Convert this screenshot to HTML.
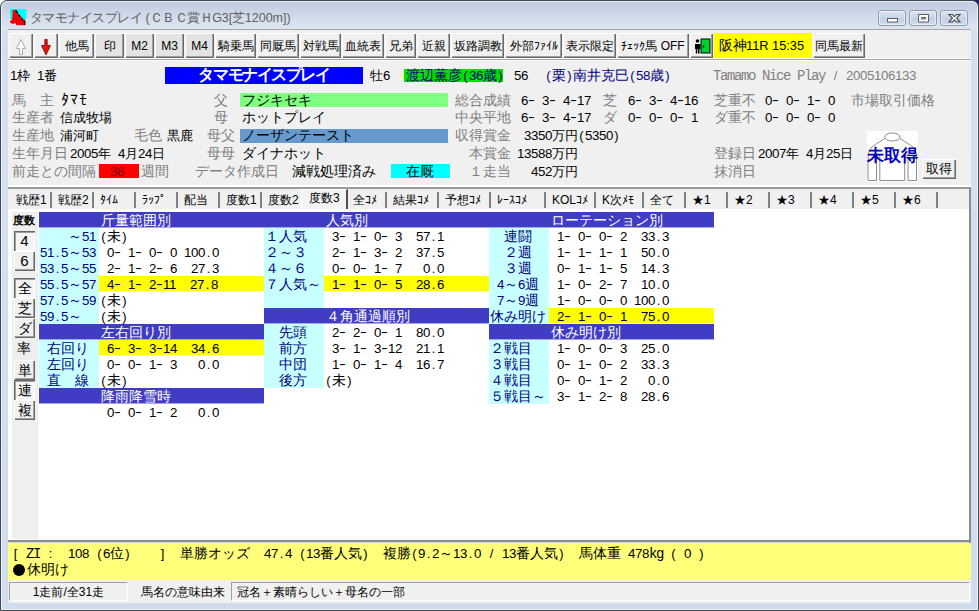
<!DOCTYPE html>
<html lang="ja"><head><meta charset="utf-8"><title>タマモナイスプレイ</title><style>
html,body{margin:0;padding:0}
body{width:979px;height:611px;overflow:hidden;position:relative;background:#fff;font-family:"Liberation Sans",sans-serif}
#win{position:absolute;left:0;top:0;width:977px;height:609px;border:1px solid #3f4650;border-radius:7px 7px 0 0;background:linear-gradient(#c0cde0 0px,#c4d0e3 6px,#d2dceb 16px,#dde6f2 29px,#d3e0f0 30px,#cfddee 611px);overflow:hidden}
#win:before{content:"";position:absolute;left:0;top:0;right:0;bottom:0;border:1px solid rgba(255,255,255,.65);border-radius:6px 6px 0 0}
.b{position:absolute}
.t{position:absolute;white-space:pre;color:#000}
.m{font-family:"Liberation Sans",sans-serif}
.m .a{font-family:"Liberation Mono",monospace}
.m .d{font-size:13.3px;letter-spacing:-.4px}
.m b{font-size:13px}
.m b,.m s{display:inline-block;width:7px;text-align:center;font-weight:inherit;white-space:pre;text-decoration:none}
.m s{font-size:13px;transform:scale(1.6,1) translateY(-1px)}
.s{font-family:"Liberation Sans",sans-serif}
.serif{font-family:"Liberation Serif",serif}
.a{letter-spacing:var(--ls)}
i,u{display:inline-block;width:1em;text-align:center;font-style:normal;text-decoration:none;letter-spacing:0;white-space:nowrap}
u{width:.5em}
.hk u{width:9.4px}
.nm i{width:14.6px}
.btn{position:absolute;box-sizing:border-box;box-shadow:inset 1px 1px 0 #fff,inset -1px -1px 0 #696969,inset -2px -2px 0 #a0a0a0;display:flex;align-items:center;justify-content:center;font-size:12px;white-space:pre;color:#000;font-family:"Liberation Sans",sans-serif}
.btn.sunk{box-shadow:inset 1px 1px 0 #696969,inset 2px 2px 0 #a0a0a0,inset -1px -1px 0 #fff}
.bl{display:inline-block;white-space:pre;line-height:14px}
.tab{position:absolute;box-sizing:border-box;border-right:2px solid #808080;display:flex;align-items:center;justify-content:flex-start;padding-left:6px;font-size:12px;white-space:pre;color:#000}
.tab.sel{background:#f3f3f3;border-right:2px solid #505050;border-left:1px solid #fff;border-top:1px solid #fff;align-items:flex-start;padding-top:1px;padding-left:7px}
.sunkp{position:absolute;box-sizing:border-box;border:1px solid;border-color:#a0a0a0 #fff #fff #a0a0a0}
.wb{position:absolute;top:10px;height:16px;width:28px;box-sizing:border-box;border:1px solid #909cae;border-radius:3px;background:linear-gradient(#dbe4f0,#c9d5e6 50%,#c0cee2 51%,#d2dded);box-shadow:inset 0 0 0 1px rgba(255,255,255,.55)}
</style></head>
<body>
<div class="b" style="right:0;top:0;width:8px;height:8px;background:#1e2258"></div>
<div id="win">
<div class="b" style="left:-1px;top:-1px;width:979px;height:611px">
<svg class="b" style="left:10px;top:9px" width="17" height="17" viewBox="0 0 17 17"><rect x="0" y="0" width="16.5" height="10" fill="#00ffff"/><path d="M2.5 1 L4.5 1 L7 4 L9 6.5 L11 9 L13 11 L15.5 13 L15 16.2 L6.5 16.2 L5.5 14 L3 15 L0 13.5 L0 12.5 L2 10.5 L2.5 6 Z" fill="#f00000"/><path d="M5.5 1 L8 4.5 M8.5 5.5 L10.5 8 M11.5 8.5 L13 11.5 M13.8 10.5 L15.2 13.5 M14.5 13.5 L14.8 16" stroke="#200" stroke-width="1.3" fill="none"/></svg>

<div class="wb" style="left:878px"><svg width="26" height="13" viewBox="0 0 26 13" style="position:absolute;left:0;top:.5px"><rect x="8.5" y="6.5" width="10" height="3.5" fill="#fff" stroke="#565d68" stroke-width="1"/></svg></div>
<div class="wb" style="left:909px"><svg width="26" height="13" viewBox="0 0 26 13" style="position:absolute;left:0;top:.5px"><path d="M8.5 2.5 H18.5 V10 H8.5 Z M11.5 5.5 V7 H15.5 V5.5 Z" fill="#fff" fill-rule="evenodd" stroke="#565d68" stroke-width="1"/></svg></div>
<div class="wb" style="left:940px"><svg width="26" height="13" viewBox="0 0 26 13" style="position:absolute;left:0;top:.5px"><path d="M8 2.5 L11.5 2.5 L13.5 4.6 L15.5 2.5 L19 2.5 L15.6 6.2 L19 10 L15.5 10 L13.5 7.9 L11.5 10 L8 10 L11.4 6.2 Z" fill="#fff" stroke="#4a505a" stroke-width="1.2"/></svg></div>

<div class="t s title" style="left:29.5px;top:9.5px;font-size:12.5px;line-height:16px;height:16px;color:#606060;"><i>タ</i><i>マ</i><i>モ</i><i>ナ</i><i>イ</i><i>ス</i><i>プ</i><i>レ</i><i>イ</i> (<i>Ｃ</i><i>Ｂ</i><i>Ｃ</i><i>賞</i><i>Ｈ</i>G3[<i>芝</i>1200m])</div>
<div class="b " style="left:8px;top:29px;width:963px;height:1px;background:#a6a6a6;"></div>
<div class="b " style="left:8px;top:30px;width:963px;height:30px;background:#f0f0f0;"></div>
<div class="b " style="left:8px;top:58px;width:963px;height:1px;background:#fff;"></div>
<div class="b " style="left:8px;top:59px;width:963px;height:1px;background:#a6a6a6;"></div>
<div class="btn" style="left:9px;top:33px;width:24px;height:25px;background:#f0f0f0"><svg width="14" height="18" viewBox="0 0 14 18" style="margin-top:2px"><path d="M7 1.5 L11.5 10.5 H8.5 V16.5 H5.5 V10.5 H2.5 Z" fill="#fff" stroke="#adadad" stroke-width="1"/></svg></div>
<div class="btn" style="left:34px;top:33px;width:24px;height:25px;background:#f0f0f0"><svg width="14" height="18" viewBox="0 0 14 18" style="margin-top:2px"><path d="M5.8 1.5 H8.2 V7.5 H11.5 L7 17 L2.5 7.5 H5.8 Z" fill="#ee1010" stroke="#700" stroke-width="0.8"/></svg></div>
<div class="btn" style="left:59px;top:33px;width:35px;height:25px;background:#f0f0f0"><span class="bl"><i>他</i><i>馬</i></span></div>
<div class="btn" style="left:95px;top:33px;width:29px;height:25px;background:#e3e3e3"><span class="bl"><i>印</i></span></div>
<div class="btn" style="left:125px;top:33px;width:29px;height:25px;background:#e3e3e3"><span class="bl">M2</span></div>
<div class="btn" style="left:155px;top:33px;width:29px;height:25px;background:#e3e3e3"><span class="bl">M3</span></div>
<div class="btn" style="left:185px;top:33px;width:29px;height:25px;background:#e3e3e3"><span class="bl">M4</span></div>
<div class="btn" style="left:215px;top:33px;width:41px;height:25px;background:#f0f0f0"><span class="bl"><i>騎</i><i>乗</i><i>馬</i></span></div>
<div class="btn" style="left:257px;top:33px;width:42px;height:25px;background:#f0f0f0"><span class="bl"><i>同</i><i>厩</i><i>馬</i></span></div>
<div class="btn" style="left:300px;top:33px;width:41px;height:25px;background:#f0f0f0"><span class="bl"><i>対</i><i>戦</i><i>馬</i></span></div>
<div class="btn" style="left:342px;top:33px;width:42px;height:25px;background:#f0f0f0"><span class="bl"><i>血</i><i>統</i><i>表</i></span></div>
<div class="btn" style="left:385px;top:33px;width:31px;height:25px;background:#f0f0f0"><span class="bl"><i>兄</i><i>弟</i></span></div>
<div class="btn" style="left:417px;top:33px;width:33px;height:25px;background:#f0f0f0"><span class="bl"><i>近</i><i>親</i></span></div>
<div class="btn" style="left:451px;top:33px;width:53px;height:25px;background:#f0f0f0"><span class="bl"><i>坂</i><i>路</i><i>調</i><i>教</i></span></div>
<div class="btn" style="left:505px;top:33px;width:57px;height:25px;background:#f0f0f0"><span class="bl"><i>外</i><i>部</i><u>ﾌ</u><u>ｧ</u><u>ｲ</u><u>ﾙ</u></span></div>
<div class="btn" style="left:563px;top:33px;width:53px;height:25px;background:#f0f0f0"><span class="bl"><i>表</i><i>示</i><i>限</i><i>定</i></span></div>
<div class="btn" style="left:617px;top:33px;width:72px;height:25px;background:#f0f0f0"><span class="bl"><u>ﾁ</u><u>ｪ</u><u>ｯ</u><u>ｸ</u><i>馬</i> OFF</span></div>
<div class="btn" style="left:690px;top:33px;width:23px;height:25px;background:#f0f0f0"><svg width="18" height="16" viewBox="0 0 18 16"><rect x="8" y="1" width="9" height="14" fill="#00d030" stroke="#000" stroke-width="1"/><circle cx="10.5" cy="8.5" r="0.9" fill="#000"/><circle cx="4.5" cy="3" r="1.8" fill="#000"/><path d="M2 6 H7.5 V11 H6.5 V15.5 H5 V11 H4.3 V15.5 H2.8 V11 H2 Z" fill="#000"/></svg></div>
<div class="btn" style="left:714px;top:33px;width:98px;height:25px;background:#ffff00;box-shadow:none;justify-content:flex-start;padding-left:5px;font-size:12.8px"><span class="bl"><span style="font-size:13.5px"><i>阪</i><i>神</i></span>11R 15:35</span></div>
<div class="btn" style="left:813px;top:33px;width:52px;height:25px;background:#f0f0f0"><span class="bl"><i>同</i><i>馬</i><i>最</i><i>新</i></span></div>
<div class="b " style="left:8px;top:60px;width:963px;height:127px;background:#f0f0f0;"></div>
<div class="b " style="left:8px;top:60px;width:963px;height:1px;background:#fafafa;"></div>
<div class="t m " style="left:10px;top:68px;font-size:13px;line-height:16px;height:16px;--ls:-0.80px;"><span class="d">1</span><i>枠</i><b> </b><span class="d">1</span><i>番</i></div>
<div class="b " style="left:165px;top:67px;width:198px;height:17px;background:#0000ff;"></div>
<div class="t m nm" style="left:165px;top:66px;font-size:16px;line-height:17px;height:17px;color:#fff;font-weight:bold;width:198px;text-align:center;--ls:-1.60px;"><i>タ</i><i>マ</i><i>モ</i><i>ナ</i><i>イ</i><i>ス</i><i>プ</i><i>レ</i><i>イ</i></div>
<div class="t m " style="left:370px;top:68px;font-size:13px;line-height:16px;height:16px;--ls:-0.80px;"><i>牡</i><span class="d">6</span></div>
<div class="b " style="left:404px;top:69px;width:99px;height:13px;background:#00e000;"></div>
<div class="t m " style="left:406px;top:67px;font-size:14px;line-height:16px;height:16px;color:#000080;--ls:-1.40px;"><i>渡</i><i>辺</i><i>薫</i><i>彦</i><b>(</b><span class="d">36</span><i>歳</i><b>)</b></div>
<div class="t m " style="left:514px;top:67px;font-size:14px;line-height:16px;height:16px;--ls:-1.40px;"><span class="d">56</span></div>
<div class="t m " style="left:545px;top:67px;font-size:14px;line-height:16px;height:16px;color:#000080;--ls:-1.40px;"><b>(</b><i>栗</i><b>)</b><i>南</i><i>井</i><i>克</i><i>巳</i><b>(</b><span class="d">58</span><i>歳</i><b>)</b></div>
<div class="t m " style="left:713px;top:67px;font-size:14px;line-height:16px;height:16px;color:#808080;--ls:-1.40px;"><span class="a">Tamamo</span><b> </b><span class="a">Nice</span><b> </b><span class="a">Play</span><b> </b><b>/</b><b> </b><span class="d">2005106133</span></div>
<div class="t m " style="left:12px;top:92px;font-size:14px;line-height:16px;height:16px;color:#808080;--ls:-1.40px;"><i>馬</i><i>　</i><i>主</i></div>
<div class="t m hk" style="left:60px;top:92px;font-size:16px;line-height:16px;height:16px;--ls:-1.60px;"><u>ﾀ</u><u>ﾏ</u><u>ﾓ</u></div>
<div class="t m " style="left:12px;top:109px;font-size:14px;line-height:16px;height:16px;color:#808080;--ls:-1.40px;"><i>生</i><i>産</i><i>者</i></div>
<div class="t m " style="left:60px;top:110px;font-size:13px;line-height:16px;height:16px;--ls:-0.80px;"><i>信</i><i>成</i><i>牧</i><i>場</i></div>
<div class="t m " style="left:12px;top:127px;font-size:14px;line-height:16px;height:16px;color:#808080;--ls:-1.40px;"><i>生</i><i>産</i><i>地</i></div>
<div class="t m " style="left:60px;top:128px;font-size:13px;line-height:16px;height:16px;--ls:-0.80px;"><i>浦</i><i>河</i><i>町</i></div>
<div class="t m " style="left:134px;top:127px;font-size:14px;line-height:16px;height:16px;color:#808080;--ls:-1.40px;"><i>毛</i><i>色</i></div>
<div class="t m " style="left:167px;top:128px;font-size:13px;line-height:16px;height:16px;--ls:-0.80px;"><i>黒</i><i>鹿</i></div>
<div class="t m " style="left:12px;top:145px;font-size:14px;line-height:16px;height:16px;color:#808080;--ls:-1.40px;"><i>生</i><i>年</i><i>月</i><i>日</i></div>
<div class="t m " style="left:70px;top:146px;font-size:13px;line-height:16px;height:16px;--ls:-0.80px;"><span class="d">2005</span><i>年</i><b> </b><span class="d">4</span><i>月</i><span class="d">24</span><i>日</i></div>
<div class="t m " style="left:12px;top:163px;font-size:14px;line-height:16px;height:16px;color:#808080;--ls:-1.40px;"><i>前</i><i>走</i><i>と</i><i>の</i><i>間</i><i>隔</i></div>
<div class="b " style="left:99px;top:164px;width:40px;height:14px;background:#ff0000;"></div>
<div class="t m " style="left:110px;top:163px;font-size:14px;line-height:16px;height:16px;color:#800000;--ls:-1.40px;"><span class="d">36</span></div>
<div class="t m " style="left:141px;top:163px;font-size:14px;line-height:16px;height:16px;color:#808080;--ls:-1.40px;"><i>週</i><i>間</i></div>
<div class="t m " style="left:214px;top:92px;font-size:14px;line-height:16px;height:16px;color:#808080;--ls:-1.40px;"><i>父</i></div>
<div class="b " style="left:240px;top:93px;width:208px;height:14px;background:#80ff80;"></div>
<div class="t m " style="left:242px;top:92px;font-size:14px;line-height:16px;height:16px;--ls:-1.40px;"><i>フ</i><i>ジ</i><i>キ</i><i>セ</i><i>キ</i></div>
<div class="t m " style="left:214px;top:109px;font-size:14px;line-height:16px;height:16px;color:#808080;--ls:-1.40px;"><i>母</i></div>
<div class="t m " style="left:242px;top:109px;font-size:14px;line-height:16px;height:16px;--ls:-1.40px;"><i>ホ</i><i>ッ</i><i>ト</i><i>プ</i><i>レ</i><i>イ</i></div>
<div class="t m " style="left:207px;top:127px;font-size:14px;line-height:16px;height:16px;color:#808080;--ls:-1.40px;"><i>母</i><i>父</i></div>
<div class="b " style="left:240px;top:129px;width:208px;height:14px;background:#6699cc;"></div>
<div class="t m " style="left:242px;top:127px;font-size:14px;line-height:16px;height:16px;--ls:-1.40px;"><i>ノ</i><i>ー</i><i>ザ</i><i>ン</i><i>テ</i><i>ー</i><i>ス</i><i>ト</i></div>
<div class="t m " style="left:207px;top:145px;font-size:14px;line-height:16px;height:16px;color:#808080;--ls:-1.40px;"><i>母</i><i>母</i></div>
<div class="t m " style="left:242px;top:145px;font-size:14px;line-height:16px;height:16px;--ls:-1.40px;"><i>ダ</i><i>イ</i><i>ナ</i><i>ホ</i><i>ッ</i><i>ト</i></div>
<div class="t m " style="left:195px;top:163px;font-size:14px;line-height:16px;height:16px;color:#808080;--ls:-1.40px;"><i>デ</i><i>ー</i><i>タ</i><i>作</i><i>成</i><i>日</i></div>
<div class="t m " style="left:292px;top:163px;font-size:14px;line-height:16px;height:16px;--ls:-1.40px;"><i>減</i><i>戦</i><i>処</i><i>理</i><i>済</i><i>み</i></div>
<div class="b " style="left:391px;top:164px;width:59px;height:14px;background:#00ffff;"></div>
<div class="t m " style="left:406px;top:163px;font-size:14px;line-height:16px;height:16px;--ls:-1.40px;"><i>在</i><i>厩</i></div>
<div class="t m " style="left:455px;top:92px;font-size:14px;line-height:16px;height:16px;color:#808080;--ls:-1.40px;"><i>総</i><i>合</i><i>成</i><i>績</i></div>
<div class="t m " style="left:521px;top:92px;font-size:14px;line-height:16px;height:16px;--ls:-1.40px;"><span class="d">6</span><s>-</s><b> </b><span class="d">3</span><s>-</s><b> </b><span class="d">4</span><s>-</s><span class="d">17</span></div>
<div class="t m " style="left:455px;top:109px;font-size:14px;line-height:16px;height:16px;color:#808080;--ls:-1.40px;"><i>中</i><i>央</i><i>平</i><i>地</i></div>
<div class="t m " style="left:521px;top:109px;font-size:14px;line-height:16px;height:16px;--ls:-1.40px;"><span class="d">6</span><s>-</s><b> </b><span class="d">3</span><s>-</s><b> </b><span class="d">4</span><s>-</s><span class="d">17</span></div>
<div class="t m " style="left:455px;top:127px;font-size:14px;line-height:16px;height:16px;color:#808080;--ls:-1.40px;"><i>収</i><i>得</i><i>賞</i><i>金</i></div>
<div class="t m " style="left:524px;top:128px;font-size:13px;line-height:16px;height:16px;--ls:-0.80px;"><span class="d">3350</span><i>万</i><i>円</i><b>(</b><span class="d">5350</span><b>)</b></div>
<div class="t m " style="left:469px;top:145px;font-size:14px;line-height:16px;height:16px;color:#808080;--ls:-1.40px;"><i>本</i><i>賞</i><i>金</i></div>
<div class="t m " style="left:517px;top:146px;font-size:13px;line-height:16px;height:16px;--ls:-0.80px;"><span class="d">13588</span><i>万</i><i>円</i></div>
<div class="t m " style="left:469px;top:163px;font-size:14px;line-height:16px;height:16px;color:#808080;--ls:-1.40px;"><i>１</i><i>走</i><i>当</i></div>
<div class="t m " style="left:531px;top:164px;font-size:13px;line-height:16px;height:16px;--ls:-0.80px;"><span class="d">452</span><i>万</i><i>円</i></div>
<div class="t m " style="left:603px;top:92px;font-size:14px;line-height:16px;height:16px;color:#808080;--ls:-1.40px;"><i>芝</i></div>
<div class="t m " style="left:628px;top:92px;font-size:14px;line-height:16px;height:16px;--ls:-1.40px;"><span class="d">6</span><s>-</s><b> </b><span class="d">3</span><s>-</s><b> </b><span class="d">4</span><s>-</s><span class="d">16</span></div>
<div class="t m " style="left:603px;top:109px;font-size:14px;line-height:16px;height:16px;color:#808080;--ls:-1.40px;"><i>ダ</i></div>
<div class="t m " style="left:628px;top:109px;font-size:14px;line-height:16px;height:16px;--ls:-1.40px;"><span class="d">0</span><s>-</s><b> </b><span class="d">0</span><s>-</s><b> </b><span class="d">0</span><s>-</s><b> </b><span class="d">1</span></div>
<div class="t m " style="left:714px;top:92px;font-size:14px;line-height:16px;height:16px;color:#808080;--ls:-1.40px;"><i>芝</i><i>重</i><i>不</i></div>
<div class="t m " style="left:765px;top:92px;font-size:14px;line-height:16px;height:16px;--ls:-1.40px;"><span class="d">0</span><s>-</s><b> </b><span class="d">0</span><s>-</s><b> </b><span class="d">1</span><s>-</s><b> </b><span class="d">0</span></div>
<div class="t m " style="left:714px;top:109px;font-size:14px;line-height:16px;height:16px;color:#808080;--ls:-1.40px;"><i>ダ</i><i>重</i><i>不</i></div>
<div class="t m " style="left:765px;top:109px;font-size:14px;line-height:16px;height:16px;--ls:-1.40px;"><span class="d">0</span><s>-</s><b> </b><span class="d">0</span><s>-</s><b> </b><span class="d">0</span><s>-</s><b> </b><span class="d">0</span></div>
<div class="t m " style="left:851px;top:92px;font-size:14px;line-height:16px;height:16px;color:#808080;--ls:-1.40px;"><i>市</i><i>場</i><i>取</i><i>引</i><i>価</i><i>格</i></div>
<div class="t m " style="left:714px;top:145px;font-size:14px;line-height:16px;height:16px;color:#808080;--ls:-1.40px;"><i>登</i><i>録</i><i>日</i></div>
<div class="t m " style="left:758px;top:146px;font-size:13px;line-height:16px;height:16px;--ls:-0.80px;"><span class="d">2007</span><i>年</i><b> </b><span class="d">4</span><i>月</i><span class="d">25</span><i>日</i></div>
<div class="t m " style="left:714px;top:163px;font-size:14px;line-height:16px;height:16px;color:#808080;--ls:-1.40px;"><i>抹</i><i>消</i><i>日</i></div>
<div class="b " style="left:867px;top:131px;width:51px;height:51px;background:#fff;"></div>
<svg class="b" style="left:867px;top:131px" width="51" height="51" viewBox="0 0 51 51"><g fill="none" stroke="#8c8c8c" stroke-width="1"><ellipse cx="25.3" cy="6" rx="7.6" ry="4"/><path d="M17.7 7.5 L8.5 13.5 Q1 17 1 27 V49.5 H9.5 V28"/><path d="M33 7.5 L42.5 13.5 Q49.5 17 49.5 27 V49.5 H41 V28"/><path d="M12.8 24 V49.5 H37.7 V24"/></g></svg>
<div class="t s serif" style="left:866px;top:146px;font-size:17px;line-height:20px;height:20px;color:#0000c0;font-weight:bold;width:53px;text-align:center;"><i>未</i><i>取</i><i>得</i></div>
<div class="btn" style="left:922px;top:159px;width:34px;height:20px;background:#f0f0f0"><span class="bl" style="font-size:13px"><i>取</i><i>得</i></span></div>
<div class="b " style="left:8px;top:185px;width:963px;height:2px;background:#ffffff;"></div>
<div class="b " style="left:8px;top:187px;width:963px;height:2px;background:#9c9c9c;"></div>
<div class="b " style="left:8px;top:189px;width:963px;height:20px;background:#f0f0f0;"></div>
<div class="tab" style="left:10px;top:192px;width:42px;height:16px"><span class="bl"><i>戦</i><i>歴</i>1</span></div>
<div class="tab" style="left:52px;top:192px;width:42px;height:16px"><span class="bl"><i>戦</i><i>歴</i>2</span></div>
<div class="tab" style="left:94px;top:192px;width:42px;height:16px"><span class="bl"><u>ﾀ</u><u>ｲ</u><u>ﾑ</u></span></div>
<div class="tab" style="left:136px;top:192px;width:42px;height:16px"><span class="bl"><u>ﾗ</u><u>ｯ</u><u>ﾌ</u><u>ﾟ</u></span></div>
<div class="tab" style="left:178px;top:192px;width:42px;height:16px"><span class="bl"><i>配</i><i>当</i></span></div>
<div class="tab" style="left:220px;top:192px;width:42px;height:16px"><span class="bl"><i>度</i><i>数</i>1</span></div>
<div class="tab" style="left:262px;top:192px;width:41px;height:16px"><span class="bl"><i>度</i><i>数</i>2</span></div>
<div class="tab sel" style="left:301px;top:189px;width:47px;height:20px"><span class="bl"><i>度</i><i>数</i>3</span></div>
<div class="tab" style="left:347px;top:192px;width:40px;height:16px"><span class="bl"><i>全</i><u>ｺ</u><u>ﾒ</u></span></div>
<div class="tab" style="left:387px;top:192px;width:52px;height:16px"><span class="bl"><i>結</i><i>果</i><u>ｺ</u><u>ﾒ</u></span></div>
<div class="tab" style="left:439px;top:192px;width:52px;height:16px"><span class="bl"><i>予</i><i>想</i><u>ｺ</u><u>ﾒ</u></span></div>
<div class="tab" style="left:491px;top:192px;width:55px;height:16px"><span class="bl"><u>ﾚ</u><u>ｰ</u><u>ｽ</u><u>ｺ</u><u>ﾒ</u></span></div>
<div class="tab" style="left:546px;top:192px;width:50px;height:16px"><span class="bl">KOL<u>ｺ</u><u>ﾒ</u></span></div>
<div class="tab" style="left:596px;top:192px;width:48px;height:16px"><span class="bl">K<i>次</i><u>ﾒ</u><u>ﾓ</u></span></div>
<div class="tab" style="left:644px;top:192px;width:42px;height:16px"><span class="bl"><i>全</i><i>て</i></span></div>
<div class="tab" style="left:686px;top:192px;width:42px;height:16px"><span class="bl"><i>★</i>1</span></div>
<div class="tab" style="left:728px;top:192px;width:42px;height:16px"><span class="bl"><i>★</i>2</span></div>
<div class="tab" style="left:770px;top:192px;width:42px;height:16px"><span class="bl"><i>★</i>3</span></div>
<div class="tab" style="left:812px;top:192px;width:42px;height:16px"><span class="bl"><i>★</i>4</span></div>
<div class="tab" style="left:854px;top:192px;width:42px;height:16px"><span class="bl"><i>★</i>5</span></div>
<div class="tab" style="left:896px;top:192px;width:42px;height:16px"><span class="bl"><i>★</i>6</span></div>
<div class="b " style="left:8px;top:209px;width:961px;height:331px;background:#fff;"></div>
<div class="b " style="left:969px;top:188px;width:2px;height:355px;background:#8c8c8c;"></div>
<div class="b " style="left:8px;top:540px;width:963px;height:2px;background:#8c8c8c;"></div>
<div class="b " style="left:12px;top:212px;width:26px;height:327px;background:#efefef;"></div>
<div class="t s " style="left:13px;top:214px;font-size:11px;line-height:12px;height:12px;font-weight:bold;"><i>度</i><i>数</i></div>
<div class="btn sunk" style="left:14px;top:231px;width:21px;height:20px;background:#f4f4f4"><span class="bl" style="font-size:15px">4</span></div>
<div class="btn " style="left:14px;top:251px;width:21px;height:20px;background:#f0f0f0"><span class="bl" style="font-size:15px">6</span></div>
<div class="btn sunk" style="left:14px;top:278px;width:21px;height:20px;background:#f4f4f4"><span class="bl" style="font-size:14px"><i>全</i></span></div>
<div class="btn " style="left:14px;top:298px;width:21px;height:20px;background:#f0f0f0"><span class="bl" style="font-size:14px"><i>芝</i></span></div>
<div class="btn " style="left:14px;top:318px;width:21px;height:20px;background:#f0f0f0"><span class="bl" style="font-size:14px"><i>ダ</i></span></div>
<div class="t s " style="left:17px;top:340px;font-size:14px;line-height:16px;height:16px;"><i>率</i></div>
<div class="btn " style="left:14px;top:360px;width:21px;height:20px;background:#f0f0f0"><span class="bl" style="font-size:14px"><i>単</i></span></div>
<div class="btn sunk" style="left:14px;top:380px;width:21px;height:20px;background:#f4f4f4"><span class="bl" style="font-size:14px"><i>連</i></span></div>
<div class="btn " style="left:14px;top:400px;width:21px;height:20px;background:#f0f0f0"><span class="bl" style="font-size:14px"><i>複</i></span></div>
<div class="b " style="left:39px;top:212px;width:225px;height:15px;background:#413cc4;"></div>
<div class="b " style="left:39px;top:227px;width:225px;height:1px;background:#a9a6e6;"></div>
<div class="t m " style="left:101px;top:212px;font-size:14px;line-height:16px;height:16px;color:#fff;--ls:-1.40px;"><i>斤</i><i>量</i><i>範</i><i>囲</i><i>別</i></div>
<div class="b " style="left:39px;top:228px;width:60px;height:16px;background:#c8ffff;"></div>
<div class="t m " style="left:40px;top:228px;font-size:14px;line-height:16px;height:16px;color:#000080;--ls:-1.40px;"><b> </b><b> </b><b> </b><b> </b><i>～</i><span class="d">51</span></div>
<div class="t m " style="left:100px;top:228px;font-size:14px;line-height:16px;height:16px;--ls:-1.40px;"><b>(</b><i>未</i><b>)</b></div>
<div class="b " style="left:39px;top:244px;width:60px;height:16px;background:#c8ffff;"></div>
<div class="t m " style="left:40px;top:244px;font-size:14px;line-height:16px;height:16px;color:#000080;--ls:-1.40px;"><span class="d">51</span><b>.</b><span class="d">5</span><i>～</i><span class="d">53</span></div>
<div class="t m " style="left:100px;top:244px;font-size:14px;line-height:16px;height:16px;--ls:-1.40px;"><b> </b><span class="d">0</span><s>-</s><b> </b><span class="d">1</span><s>-</s><b> </b><span class="d">0</span><s>-</s><b> </b><span class="d">0</span><b> </b><span class="d">100</span><b>.</b><span class="d">0</span></div>
<div class="b " style="left:39px;top:260px;width:60px;height:16px;background:#c8ffff;"></div>
<div class="t m " style="left:40px;top:260px;font-size:14px;line-height:16px;height:16px;color:#000080;--ls:-1.40px;"><span class="d">53</span><b>.</b><span class="d">5</span><i>～</i><span class="d">55</span></div>
<div class="t m " style="left:100px;top:260px;font-size:14px;line-height:16px;height:16px;--ls:-1.40px;"><b> </b><span class="d">2</span><s>-</s><b> </b><span class="d">1</span><s>-</s><b> </b><span class="d">2</span><s>-</s><b> </b><span class="d">6</span><b> </b><b> </b><span class="d">27</span><b>.</b><span class="d">3</span></div>
<div class="b " style="left:39px;top:276px;width:60px;height:16px;background:#c8ffff;"></div>
<div class="t m " style="left:40px;top:276px;font-size:14px;line-height:16px;height:16px;color:#000080;--ls:-1.40px;"><span class="d">55</span><b>.</b><span class="d">5</span><i>～</i><span class="d">57</span></div>
<div class="b " style="left:99px;top:276px;width:165px;height:15px;background:#ffff00;"></div>
<div class="b " style="left:99px;top:291px;width:165px;height:1px;background:#ffffa0;"></div>
<div class="t m " style="left:100px;top:276px;font-size:14px;line-height:16px;height:16px;--ls:-1.40px;"><b> </b><span class="d">4</span><s>-</s><b> </b><span class="d">1</span><s>-</s><b> </b><span class="d">2</span><s>-</s><span class="d">11</span><b> </b><b> </b><span class="d">27</span><b>.</b><span class="d">8</span></div>
<div class="b " style="left:39px;top:292px;width:60px;height:16px;background:#c8ffff;"></div>
<div class="t m " style="left:40px;top:292px;font-size:14px;line-height:16px;height:16px;color:#000080;--ls:-1.40px;"><span class="d">57</span><b>.</b><span class="d">5</span><i>～</i><span class="d">59</span></div>
<div class="t m " style="left:100px;top:292px;font-size:14px;line-height:16px;height:16px;--ls:-1.40px;"><b>(</b><i>未</i><b>)</b></div>
<div class="b " style="left:39px;top:308px;width:60px;height:16px;background:#c8ffff;"></div>
<div class="t m " style="left:40px;top:308px;font-size:14px;line-height:16px;height:16px;color:#000080;--ls:-1.40px;"><span class="d">59</span><b>.</b><span class="d">5</span><i>～</i></div>
<div class="t m " style="left:100px;top:308px;font-size:14px;line-height:16px;height:16px;--ls:-1.40px;"><b>(</b><i>未</i><b>)</b></div>
<div class="b " style="left:39px;top:324px;width:225px;height:15px;background:#413cc4;"></div>
<div class="b " style="left:39px;top:339px;width:225px;height:1px;background:#a9a6e6;"></div>
<div class="t m " style="left:101px;top:324px;font-size:14px;line-height:16px;height:16px;color:#fff;--ls:-1.40px;"><i>左</i><i>右</i><i>回</i><i>り</i><i>別</i></div>
<div class="b " style="left:39px;top:340px;width:60px;height:16px;background:#c8ffff;"></div>
<div class="t m " style="left:40px;top:340px;font-size:14px;line-height:16px;height:16px;color:#000080;--ls:-1.40px;"><b> </b><i>右</i><i>回</i><i>り</i></div>
<div class="b " style="left:99px;top:340px;width:165px;height:15px;background:#ffff00;"></div>
<div class="b " style="left:99px;top:355px;width:165px;height:1px;background:#ffffa0;"></div>
<div class="t m " style="left:100px;top:340px;font-size:14px;line-height:16px;height:16px;--ls:-1.40px;"><b> </b><span class="d">6</span><s>-</s><b> </b><span class="d">3</span><s>-</s><b> </b><span class="d">3</span><s>-</s><span class="d">14</span><b> </b><b> </b><span class="d">34</span><b>.</b><span class="d">6</span></div>
<div class="b " style="left:39px;top:356px;width:60px;height:16px;background:#c8ffff;"></div>
<div class="t m " style="left:40px;top:356px;font-size:14px;line-height:16px;height:16px;color:#000080;--ls:-1.40px;"><b> </b><i>左</i><i>回</i><i>り</i></div>
<div class="t m " style="left:100px;top:356px;font-size:14px;line-height:16px;height:16px;--ls:-1.40px;"><b> </b><span class="d">0</span><s>-</s><b> </b><span class="d">0</span><s>-</s><b> </b><span class="d">1</span><s>-</s><b> </b><span class="d">3</span><b> </b><b> </b><b> </b><span class="d">0</span><b>.</b><span class="d">0</span></div>
<div class="b " style="left:39px;top:372px;width:60px;height:16px;background:#c8ffff;"></div>
<div class="t m " style="left:40px;top:372px;font-size:14px;line-height:16px;height:16px;color:#000080;--ls:-1.40px;"><b> </b><i>直</i><i>　</i><i>線</i></div>
<div class="t m " style="left:100px;top:372px;font-size:14px;line-height:16px;height:16px;--ls:-1.40px;"><b>(</b><i>未</i><b>)</b></div>
<div class="b " style="left:39px;top:388px;width:225px;height:15px;background:#413cc4;"></div>
<div class="b " style="left:39px;top:403px;width:225px;height:1px;background:#a9a6e6;"></div>
<div class="t m " style="left:101px;top:388px;font-size:14px;line-height:16px;height:16px;color:#fff;--ls:-1.40px;"><i>降</i><i>雨</i><i>降</i><i>雪</i><i>時</i></div>
<div class="t m " style="left:100px;top:404px;font-size:14px;line-height:16px;height:16px;--ls:-1.40px;"><b> </b><span class="d">0</span><s>-</s><b> </b><span class="d">0</span><s>-</s><b> </b><span class="d">1</span><s>-</s><b> </b><span class="d">2</span><b> </b><b> </b><b> </b><span class="d">0</span><b>.</b><span class="d">0</span></div>
<div class="b " style="left:264px;top:212px;width:225px;height:15px;background:#413cc4;"></div>
<div class="b " style="left:264px;top:227px;width:225px;height:1px;background:#a9a6e6;"></div>
<div class="t m " style="left:326px;top:212px;font-size:14px;line-height:16px;height:16px;color:#fff;--ls:-1.40px;"><i>人</i><i>気</i><i>別</i></div>
<div class="b " style="left:264px;top:228px;width:60px;height:16px;background:#c8ffff;"></div>
<div class="t m " style="left:265px;top:228px;font-size:14px;line-height:16px;height:16px;color:#000080;--ls:-1.40px;"><i>１</i><i>人</i><i>気</i></div>
<div class="t m " style="left:325px;top:228px;font-size:14px;line-height:16px;height:16px;--ls:-1.40px;"><b> </b><span class="d">3</span><s>-</s><b> </b><span class="d">1</span><s>-</s><b> </b><span class="d">0</span><s>-</s><b> </b><span class="d">3</span><b> </b><b> </b><span class="d">57</span><b>.</b><span class="d">1</span></div>
<div class="b " style="left:264px;top:244px;width:60px;height:16px;background:#c8ffff;"></div>
<div class="t m " style="left:265px;top:244px;font-size:14px;line-height:16px;height:16px;color:#000080;--ls:-1.40px;"><i>２</i><i>～</i><i>３</i></div>
<div class="t m " style="left:325px;top:244px;font-size:14px;line-height:16px;height:16px;--ls:-1.40px;"><b> </b><span class="d">2</span><s>-</s><b> </b><span class="d">1</span><s>-</s><b> </b><span class="d">3</span><s>-</s><b> </b><span class="d">2</span><b> </b><b> </b><span class="d">37</span><b>.</b><span class="d">5</span></div>
<div class="b " style="left:264px;top:260px;width:60px;height:16px;background:#c8ffff;"></div>
<div class="t m " style="left:265px;top:260px;font-size:14px;line-height:16px;height:16px;color:#000080;--ls:-1.40px;"><i>４</i><i>～</i><i>６</i></div>
<div class="t m " style="left:325px;top:260px;font-size:14px;line-height:16px;height:16px;--ls:-1.40px;"><b> </b><span class="d">0</span><s>-</s><b> </b><span class="d">0</span><s>-</s><b> </b><span class="d">1</span><s>-</s><b> </b><span class="d">7</span><b> </b><b> </b><b> </b><span class="d">0</span><b>.</b><span class="d">0</span></div>
<div class="b " style="left:264px;top:276px;width:60px;height:16px;background:#c8ffff;"></div>
<div class="t m " style="left:265px;top:276px;font-size:14px;line-height:16px;height:16px;color:#000080;--ls:-1.40px;"><i>７</i><i>人</i><i>気</i><i>～</i></div>
<div class="b " style="left:324px;top:276px;width:165px;height:15px;background:#ffff00;"></div>
<div class="b " style="left:324px;top:291px;width:165px;height:1px;background:#ffffa0;"></div>
<div class="t m " style="left:325px;top:276px;font-size:14px;line-height:16px;height:16px;--ls:-1.40px;"><b> </b><span class="d">1</span><s>-</s><b> </b><span class="d">1</span><s>-</s><b> </b><span class="d">0</span><s>-</s><b> </b><span class="d">5</span><b> </b><b> </b><span class="d">28</span><b>.</b><span class="d">6</span></div>
<div class="b " style="left:264px;top:292px;width:60px;height:16px;background:#c8ffff;"></div>
<div class="b " style="left:264px;top:308px;width:225px;height:15px;background:#413cc4;"></div>
<div class="b " style="left:264px;top:323px;width:225px;height:1px;background:#a9a6e6;"></div>
<div class="t m " style="left:326px;top:308px;font-size:14px;line-height:16px;height:16px;color:#fff;--ls:-1.40px;"><i>４</i><i>角</i><i>通</i><i>過</i><i>順</i><i>別</i></div>
<div class="b " style="left:264px;top:324px;width:60px;height:16px;background:#c8ffff;"></div>
<div class="t m " style="left:265px;top:324px;font-size:14px;line-height:16px;height:16px;color:#000080;--ls:-1.40px;"><i>　</i><i>先</i><i>頭</i></div>
<div class="t m " style="left:325px;top:324px;font-size:14px;line-height:16px;height:16px;--ls:-1.40px;"><b> </b><span class="d">2</span><s>-</s><b> </b><span class="d">2</span><s>-</s><b> </b><span class="d">0</span><s>-</s><b> </b><span class="d">1</span><b> </b><b> </b><span class="d">80</span><b>.</b><span class="d">0</span></div>
<div class="b " style="left:264px;top:340px;width:60px;height:16px;background:#c8ffff;"></div>
<div class="t m " style="left:265px;top:340px;font-size:14px;line-height:16px;height:16px;color:#000080;--ls:-1.40px;"><i>　</i><i>前</i><i>方</i></div>
<div class="t m " style="left:325px;top:340px;font-size:14px;line-height:16px;height:16px;--ls:-1.40px;"><b> </b><span class="d">3</span><s>-</s><b> </b><span class="d">1</span><s>-</s><b> </b><span class="d">3</span><s>-</s><span class="d">12</span><b> </b><b> </b><span class="d">21</span><b>.</b><span class="d">1</span></div>
<div class="b " style="left:264px;top:356px;width:60px;height:16px;background:#c8ffff;"></div>
<div class="t m " style="left:265px;top:356px;font-size:14px;line-height:16px;height:16px;color:#000080;--ls:-1.40px;"><i>　</i><i>中</i><i>団</i></div>
<div class="t m " style="left:325px;top:356px;font-size:14px;line-height:16px;height:16px;--ls:-1.40px;"><b> </b><span class="d">1</span><s>-</s><b> </b><span class="d">0</span><s>-</s><b> </b><span class="d">1</span><s>-</s><b> </b><span class="d">4</span><b> </b><b> </b><span class="d">16</span><b>.</b><span class="d">7</span></div>
<div class="b " style="left:264px;top:372px;width:60px;height:16px;background:#c8ffff;"></div>
<div class="t m " style="left:265px;top:372px;font-size:14px;line-height:16px;height:16px;color:#000080;--ls:-1.40px;"><i>　</i><i>後</i><i>方</i></div>
<div class="t m " style="left:325px;top:372px;font-size:14px;line-height:16px;height:16px;--ls:-1.40px;"><b>(</b><i>未</i><b>)</b></div>
<div class="b " style="left:489px;top:212px;width:225px;height:15px;background:#413cc4;"></div>
<div class="b " style="left:489px;top:227px;width:225px;height:1px;background:#a9a6e6;"></div>
<div class="t m " style="left:551px;top:212px;font-size:14px;line-height:16px;height:16px;color:#fff;--ls:-1.40px;"><i>ロ</i><i>ー</i><i>テ</i><i>ー</i><i>シ</i><i>ョ</i><i>ン</i><i>別</i></div>
<div class="b " style="left:489px;top:228px;width:60px;height:16px;background:#c8ffff;"></div>
<div class="t m " style="left:490px;top:228px;font-size:14px;line-height:16px;height:16px;color:#000080;--ls:-1.40px;"><i>　</i><i>連</i><i>闘</i></div>
<div class="t m " style="left:550px;top:228px;font-size:14px;line-height:16px;height:16px;--ls:-1.40px;"><b> </b><span class="d">1</span><s>-</s><b> </b><span class="d">0</span><s>-</s><b> </b><span class="d">0</span><s>-</s><b> </b><span class="d">2</span><b> </b><b> </b><span class="d">33</span><b>.</b><span class="d">3</span></div>
<div class="b " style="left:489px;top:244px;width:60px;height:16px;background:#c8ffff;"></div>
<div class="t m " style="left:490px;top:244px;font-size:14px;line-height:16px;height:16px;color:#000080;--ls:-1.40px;"><i>　</i><i>２</i><i>週</i></div>
<div class="t m " style="left:550px;top:244px;font-size:14px;line-height:16px;height:16px;--ls:-1.40px;"><b> </b><span class="d">1</span><s>-</s><b> </b><span class="d">1</span><s>-</s><b> </b><span class="d">1</span><s>-</s><b> </b><span class="d">1</span><b> </b><b> </b><span class="d">50</span><b>.</b><span class="d">0</span></div>
<div class="b " style="left:489px;top:260px;width:60px;height:16px;background:#c8ffff;"></div>
<div class="t m " style="left:490px;top:260px;font-size:14px;line-height:16px;height:16px;color:#000080;--ls:-1.40px;"><i>　</i><i>３</i><i>週</i></div>
<div class="t m " style="left:550px;top:260px;font-size:14px;line-height:16px;height:16px;--ls:-1.40px;"><b> </b><span class="d">0</span><s>-</s><b> </b><span class="d">1</span><s>-</s><b> </b><span class="d">1</span><s>-</s><b> </b><span class="d">5</span><b> </b><b> </b><span class="d">14</span><b>.</b><span class="d">3</span></div>
<div class="b " style="left:489px;top:276px;width:60px;height:16px;background:#c8ffff;"></div>
<div class="t m " style="left:490px;top:276px;font-size:14px;line-height:16px;height:16px;color:#000080;--ls:-1.40px;"><b> </b><span class="d">4</span><i>～</i><span class="d">6</span><i>週</i></div>
<div class="t m " style="left:550px;top:276px;font-size:14px;line-height:16px;height:16px;--ls:-1.40px;"><b> </b><span class="d">1</span><s>-</s><b> </b><span class="d">0</span><s>-</s><b> </b><span class="d">2</span><s>-</s><b> </b><span class="d">7</span><b> </b><b> </b><span class="d">10</span><b>.</b><span class="d">0</span></div>
<div class="b " style="left:489px;top:292px;width:60px;height:16px;background:#c8ffff;"></div>
<div class="t m " style="left:490px;top:292px;font-size:14px;line-height:16px;height:16px;color:#000080;--ls:-1.40px;"><b> </b><span class="d">7</span><i>～</i><span class="d">9</span><i>週</i></div>
<div class="t m " style="left:550px;top:292px;font-size:14px;line-height:16px;height:16px;--ls:-1.40px;"><b> </b><span class="d">1</span><s>-</s><b> </b><span class="d">0</span><s>-</s><b> </b><span class="d">0</span><s>-</s><b> </b><span class="d">0</span><b> </b><span class="d">100</span><b>.</b><span class="d">0</span></div>
<div class="b " style="left:489px;top:308px;width:60px;height:16px;background:#c8ffff;"></div>
<div class="t m " style="left:490px;top:308px;font-size:14px;line-height:16px;height:16px;color:#000080;--ls:-1.40px;"><i>休</i><i>み</i><i>明</i><i>け</i></div>
<div class="b " style="left:549px;top:308px;width:165px;height:15px;background:#ffff00;"></div>
<div class="b " style="left:549px;top:323px;width:165px;height:1px;background:#ffffa0;"></div>
<div class="t m " style="left:550px;top:308px;font-size:14px;line-height:16px;height:16px;--ls:-1.40px;"><b> </b><span class="d">2</span><s>-</s><b> </b><span class="d">1</span><s>-</s><b> </b><span class="d">0</span><s>-</s><b> </b><span class="d">1</span><b> </b><b> </b><span class="d">75</span><b>.</b><span class="d">0</span></div>
<div class="b " style="left:489px;top:324px;width:225px;height:15px;background:#413cc4;"></div>
<div class="b " style="left:489px;top:339px;width:225px;height:1px;background:#a9a6e6;"></div>
<div class="t m " style="left:551px;top:324px;font-size:14px;line-height:16px;height:16px;color:#fff;--ls:-1.40px;"><i>休</i><i>み</i><i>明</i><i>け</i><i>別</i></div>
<div class="b " style="left:489px;top:340px;width:60px;height:16px;background:#c8ffff;"></div>
<div class="t m " style="left:490px;top:340px;font-size:14px;line-height:16px;height:16px;color:#000080;--ls:-1.40px;"><i>２</i><i>戦</i><i>目</i></div>
<div class="t m " style="left:550px;top:340px;font-size:14px;line-height:16px;height:16px;--ls:-1.40px;"><b> </b><span class="d">1</span><s>-</s><b> </b><span class="d">0</span><s>-</s><b> </b><span class="d">0</span><s>-</s><b> </b><span class="d">3</span><b> </b><b> </b><span class="d">25</span><b>.</b><span class="d">0</span></div>
<div class="b " style="left:489px;top:356px;width:60px;height:16px;background:#c8ffff;"></div>
<div class="t m " style="left:490px;top:356px;font-size:14px;line-height:16px;height:16px;color:#000080;--ls:-1.40px;"><i>３</i><i>戦</i><i>目</i></div>
<div class="t m " style="left:550px;top:356px;font-size:14px;line-height:16px;height:16px;--ls:-1.40px;"><b> </b><span class="d">0</span><s>-</s><b> </b><span class="d">1</span><s>-</s><b> </b><span class="d">0</span><s>-</s><b> </b><span class="d">2</span><b> </b><b> </b><span class="d">33</span><b>.</b><span class="d">3</span></div>
<div class="b " style="left:489px;top:372px;width:60px;height:16px;background:#c8ffff;"></div>
<div class="t m " style="left:490px;top:372px;font-size:14px;line-height:16px;height:16px;color:#000080;--ls:-1.40px;"><i>４</i><i>戦</i><i>目</i></div>
<div class="t m " style="left:550px;top:372px;font-size:14px;line-height:16px;height:16px;--ls:-1.40px;"><b> </b><span class="d">0</span><s>-</s><b> </b><span class="d">0</span><s>-</s><b> </b><span class="d">1</span><s>-</s><b> </b><span class="d">2</span><b> </b><b> </b><b> </b><span class="d">0</span><b>.</b><span class="d">0</span></div>
<div class="b " style="left:489px;top:388px;width:60px;height:16px;background:#c8ffff;"></div>
<div class="t m " style="left:490px;top:388px;font-size:14px;line-height:16px;height:16px;color:#000080;--ls:-1.40px;"><i>５</i><i>戦</i><i>目</i><i>～</i></div>
<div class="t m " style="left:550px;top:388px;font-size:14px;line-height:16px;height:16px;--ls:-1.40px;"><b> </b><span class="d">3</span><s>-</s><b> </b><span class="d">1</span><s>-</s><b> </b><span class="d">2</span><s>-</s><b> </b><span class="d">8</span><b> </b><b> </b><span class="d">28</span><b>.</b><span class="d">6</span></div>
<div class="b " style="left:8px;top:543px;width:963px;height:37px;background:#ffff7a;"></div>
<div class="t m " style="left:12px;top:544.5px;font-size:14px;line-height:16px;height:16px;--ls:-1.40px;"><b>[</b><b> </b><span class="a">ZI</span><b> </b><b>:</b><b> </b><b> </b><span class="d">108</span><b> </b><b>(</b><span class="d">6</span><i>位</i><b>)</b><b> </b><b> </b><b> </b><b> </b><b>]</b><b> </b><b> </b><i>単</i><i>勝</i><i>オ</i><i>ッ</i><i>ズ</i><b> </b><b> </b><span class="d">47</span><b>.</b><span class="d">4</span><b> </b><b>(</b><span class="d">13</span><i>番</i><i>人</i><i>気</i><b>)</b><b> </b><b> </b><i>複</i><i>勝</i><b>(</b><span class="d">9</span><b>.</b><span class="d">2</span><i>～</i><span class="d">13</span><b>.</b><span class="d">0</span><b> </b><b>/</b><b> </b><span class="d">13</span><i>番</i><i>人</i><i>気</i><b>)</b><b> </b><b> </b><i>馬</i><i>体</i><i>重</i><b> </b><span class="d">478</span><span class="a">kg</span><b> </b><b>(</b><b> </b><span class="d">0</span><b> </b><b>)</b></div>
<div class="b" style="left:13px;top:563.5px;width:12px;height:12px;border-radius:50%;background:#000"></div>
<div class="t m " style="left:27px;top:561px;font-size:14px;line-height:16px;height:16px;--ls:-1.40px;"><i>休</i><i>明</i><i>け</i></div>
<div class="b " style="left:8px;top:580px;width:963px;height:23px;background:#f0f0f0;"></div>
<div class="sunkp" style="left:9px;top:582px;width:119px;height:19px"></div>
<div class="t s " style="left:9px;top:584px;font-size:12px;line-height:16px;height:16px;width:119px;text-align:center;">1<i>走</i><i>前</i>/<i>全</i>31<i>走</i></div>
<div class="t s " style="left:141px;top:584px;font-size:12px;line-height:16px;height:16px;"><i>馬</i><i>名</i><i>の</i><i>意</i><i>味</i><i>由</i><i>来</i></div>
<div class="sunkp" style="left:231px;top:582px;width:739px;height:19px"></div>
<div class="t s " style="left:237px;top:584px;font-size:12px;line-height:16px;height:16px;"><i>冠</i><i>名</i><i>＋</i><i>素</i><i>晴</i><i>ら</i><i>し</i><i>い</i><i>＋</i><i>母</i><i>名</i><i>の</i><i>一</i><i>部</i></div>
</div></div>
</body></html>
